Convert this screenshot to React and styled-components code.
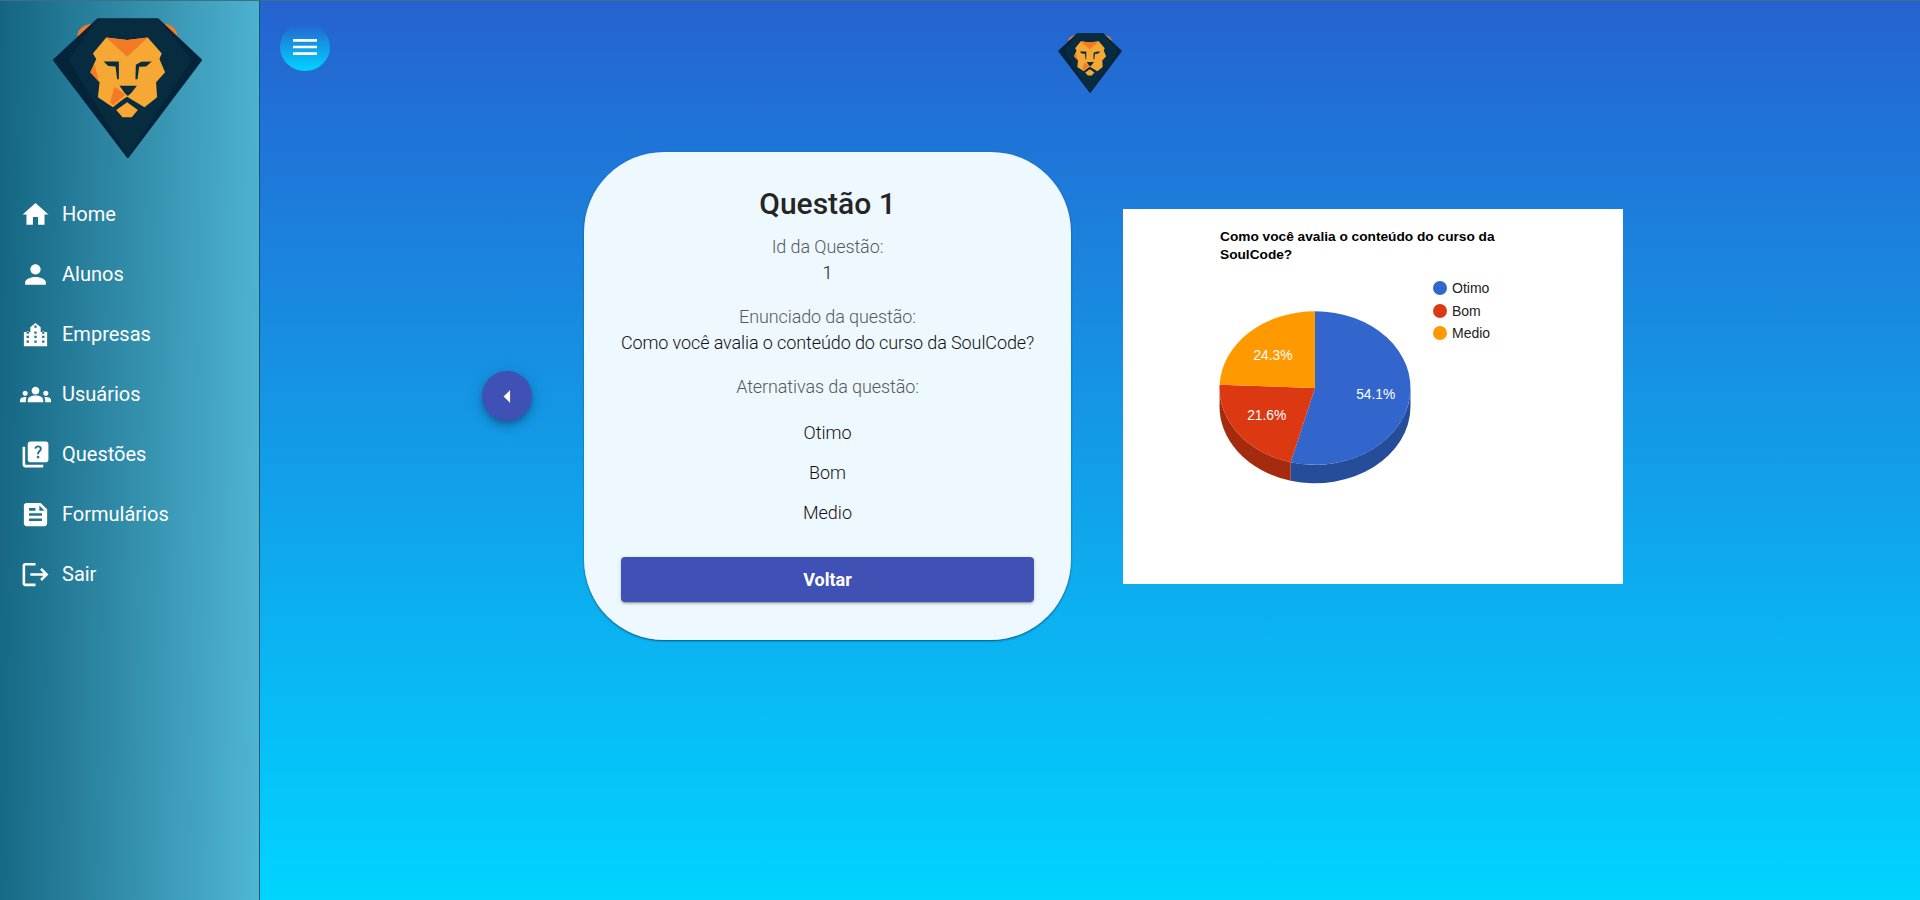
import React from "react";
import styled, { createGlobalStyle } from "styled-components";
import {
  MdHome,
  MdPerson,
  MdGroups,
  MdQuiz,
  MdFeed,
  MdLogout,
  MdMenu,
  MdArrowLeft,
} from "react-icons/md";

const GlobalStyle = createGlobalStyle`
  * { box-sizing: border-box; }
  body {
    margin: 0;
    font-family: Roboto, "Liberation Sans", sans-serif;
    overflow: hidden;
  }
`;

const Page = styled.div`
  display: flex;
  width: 1920px;
  height: 900px;
  background: linear-gradient(180deg, #2563d0 0%, #00d4ff 100%);
  border-top: 1px solid #3d6f86;
`;

const Sidebar = styled.aside`
  flex: 0 0 260px;
  display: flex;
  flex-direction: column;
  background: linear-gradient(91deg, #146581 0%, #50b6d4 100%);
  border-right: 1px solid #17566e;
`;

const SideLogo = styled.div`
  display: flex;
  justify-content: center;
  padding: 17px 5px 0 0;
  height: 183px;
`;

const NavList = styled.nav`
  display: flex;
  flex-direction: column;
`;

const NavItem = styled.a`
  display: flex;
  align-items: center;
  height: 60px;
  padding-left: 20px;
  gap: 11px;
  color: #fff;
  font-size: 20px;
  svg {
    width: 31px;
    height: 31px;
    flex: none;
  }
`;

const Main = styled.main`
  flex: 1;
  display: flex;
  flex-direction: column;
`;

const Header = styled.header`
  position: relative;
  display: flex;
  justify-content: center;
  height: 151px;
  padding-top: 32px;
`;

const MenuButton = styled.button`
  position: absolute;
  left: 20px;
  top: 22px;
  width: 50px;
  height: 48px;
  border: 0;
  border-radius: 50%;
  padding: 0;
  display: flex;
  align-items: center;
  justify-content: center;
  color: #fff;
  background: linear-gradient(180deg, #2563d0 0%, #00d4ff 100%);
  svg {
    width: 32px;
    height: 32px;
  }
`;

const Content = styled.section`
  display: flex;
  align-items: flex-start;
  padding-left: 222px;
  gap: 52px;
`;

const BackFab = styled.button`
  width: 50px;
  height: 50px;
  margin-top: 219px;
  border: 0;
  border-radius: 50%;
  padding: 0;
  display: flex;
  align-items: center;
  justify-content: center;
  color: #fff;
  background: #3f51b5;
  box-shadow: 0 3px 5px -1px rgba(0, 0, 0, 0.2), 0 6px 10px 0 rgba(0, 0, 0, 0.14),
    0 1px 18px 0 rgba(0, 0, 0, 0.12);
  svg {
    width: 31px;
    height: 31px;
  }
`;

const Card = styled.article`
  width: 487px;
  height: 488px;
  padding: 34px 37px 0;
  display: flex;
  flex-direction: column;
  align-items: center;
  text-align: center;
  background: #eef8ff;
  border-radius: 80px;
  box-shadow: 0 1px 2px rgba(0, 50, 90, 0.7);
`;

const Title = styled.h1`
  margin: 0 0 12px;
  height: 36px;
  line-height: 36px;
  font-size: 30px;
  font-weight: 500;
  color: #252525;
`;

const Field = styled.div`
  margin-bottom: ${(props) => props.$gap}px;
  font-size: 18px;
  line-height: 26px;
  font-weight: 300;
  letter-spacing: -0.1px;
  white-space: nowrap;
`;

const Label = styled.div`
  color: #555a5e;
`;

const Value = styled.div`
  color: #111;
`;

const Option = styled.div`
  height: 40px;
  line-height: 40px;
  font-size: 18px;
  font-weight: 300;
  color: #111;
`;

const Options = styled.div`
  margin-bottom: 24px;
`;

const BackButton = styled.button`
  width: 413px;
  height: 45px;
  flex: none;
  border: 0;
  border-radius: 4px;
  font-family: inherit;
  font-size: 18px;
  font-weight: 700;
  color: #fff;
  background: #3f51b5;
  box-shadow: 0 3px 1px -2px rgba(0, 0, 0, 0.2), 0 2px 2px 0 rgba(0, 0, 0, 0.14),
    0 1px 5px 0 rgba(0, 0, 0, 0.12);
`;

const ChartBox = styled.figure`
  margin: 57px 0 0;
  width: 500px;
  height: 375px;
  background: #fff;
  svg {
    display: block;
  }
`;

const ChartTitle = styled.text`
  font-family: "Liberation Sans", Arial, sans-serif;
  font-size: 13.7px;
  font-weight: 700;
  fill: #000;
`;

const LegendText = styled.text`
  font-family: "Liberation Sans", Arial, sans-serif;
  font-size: 14px;
  fill: #222;
`;

const SliceLabel = styled.text`
  font-family: "Liberation Sans", Arial, sans-serif;
  font-size: 13.8px;
  fill: #fff;
  text-anchor: middle;
`;

// predio com o centro em ponta, nao tem igual no pacote de icones
const EmpresasIcon = () => (
  <svg viewBox="0 0 24 24" fill="currentColor">
    <path
      fillRule="evenodd"
      d="M3 21V10H8V6.3L12 3L16 6.3V10H21V21H3Z
         M11.1 5H12.9V6.8H11.1Z
         M5.1 9.6H6.9V11.4H5.1Z M11.1 9.6H12.9V11.4H11.1Z M17.1 9.6H18.9V11.4H17.1Z
         M5.1 13H6.9V14.8H5.1Z M11.1 13H12.9V14.8H11.1Z M17.1 13H18.9V14.8H17.1Z
         M5.1 16.6H6.9V18.4H5.1Z M11.1 16.6H12.9V18.4H11.1Z M17.1 16.6H18.9V18.4H17.1Z"
    />
  </svg>
);

const navItems = [
  { label: "Home", Icon: MdHome },
  { label: "Alunos", Icon: MdPerson },
  { label: "Empresas", Icon: EmpresasIcon },
  { label: "Usuários", Icon: MdGroups },
  { label: "Questões", Icon: MdQuiz },
  { label: "Formulários", Icon: MdFeed },
  { label: "Sair", Icon: MdLogout },
];

const Logo = ({ width, height }) => (
  <svg width={width} height={height} viewBox="160 52 448 420">
    <path d="M232 105 Q236 76 275 68 L300 110 Z" fill="#f47b25" />
    <path d="M535 105 Q532 76 497 68 L470 110 Z" fill="#f47b25" />
    <path
      d="M295 55 H475 L605 178 L385 470 L163 178 Z"
      fill="#04243a"
      stroke="#04243a"
      strokeWidth="6"
      strokeLinejoin="round"
    />
    <path d="M295 55 H475 L578 178 L385 468 L207 178 Z" fill="#072c40" />
    <path
      d="M320 110 L383 118 L445 110 L487 158 L480 175 L497 215 L470 245 L473 290 L435 320 L395 296 L383 288 L371 296 L340 320 L295 290 L300 245 L272 215 L290 175 L280 158 Z"
      fill="#f5a934"
    />
    <path d="M320 110 L383 118 L445 110 L383 168 Z" fill="#f47b25" />
    <path d="M272 215 L285 190 L298 243 Z" fill="#f47b25" />
    <path d="M345 258 L378 282 L340 314 L332 305 Z" fill="#f47b25" />
    <path d="M350 328 L383 305 L415 328 L397 350 L369 350 Z" fill="#f5a934" />
    <path d="M312 182 H358 V236 L353 236 L348 197 L326 196 Z" fill="#072c40" />
    <path d="M457 182 L425 183 L409 192 L408 236 L414 236 L419 198 L440 197 Z" fill="#072c40" />
    <path d="M360 255 H412 L396 276 L385 286 L375 276 Z" fill="#072c40" />
  </svg>
);

// angulos medidos a partir do topo, sentido horario
const CX = 192;
const CY = 179;
const RX = 95.5;
const RY = 76.7;
const DEPTH = 18.5;

const point = (pct) => {
  const t = (pct / 100) * 2 * Math.PI;
  return [CX + RX * Math.sin(t), CY - RY * Math.cos(t)];
};

const slice = (from, to) => {
  const [x1, y1] = point(from);
  const [x2, y2] = point(to);
  const large = to - from > 50 ? 1 : 0;
  return `M${CX} ${CY} L${x1} ${y1} A${RX} ${RY} 0 ${large} 1 ${x2} ${y2} Z`;
};

const side = (fromX, fromY, toX, toY) =>
  `M${fromX} ${fromY} A${RX} ${RY} 0 0 1 ${toX} ${toY} L${toX} ${toY + DEPTH} A${RX} ${RY} 0 0 0 ${fromX} ${fromY + DEPTH} Z`;

const PieChart = () => {
  const [bx, by] = point(54.1);
  const [rx, ry] = point(75.7);
  return (
    <svg width="500" height="375" viewBox="0 0 500 375">
      <ChartTitle x="97" y="32">Como você avalia o conteúdo do curso da</ChartTitle>
      <ChartTitle x="97" y="50">SoulCode?</ChartTitle>

      <path d={side(CX + RX, CY, bx, by)} fill="#264d99" />
      <path d={side(bx, by, rx, ry)} fill="#a52b0e" />

      <path d={slice(0, 54.1)} fill="#3366cc" />
      <path d={slice(54.1, 75.7)} fill="#dc3912" />
      <path d={slice(75.7, 100)} fill="#ff9900" />

      <SliceLabel x="252.7" y="189.5">54.1%</SliceLabel>
      <SliceLabel x="143.7" y="210.5">21.6%</SliceLabel>
      <SliceLabel x="150" y="150.5">24.3%</SliceLabel>

      <circle cx="317" cy="79" r="7" fill="#3366cc" />
      <LegendText x="329" y="84">Otimo</LegendText>
      <circle cx="317" cy="102" r="7" fill="#dc3912" />
      <LegendText x="329" y="107">Bom</LegendText>
      <circle cx="317" cy="124" r="7" fill="#ff9900" />
      <LegendText x="329" y="129">Medio</LegendText>
    </svg>
  );
};

const App = () => {
  return (
    <Page>
      <GlobalStyle />
      <Sidebar>
        <SideLogo>
          <Logo width={149} height={140} />
        </SideLogo>
        <NavList>
          {navItems.map(({ label, Icon }) => (
            <NavItem key={label}>
              <Icon />
              {label}
            </NavItem>
          ))}
        </NavList>
      </Sidebar>
      <Main>
        <Header>
          <MenuButton aria-label="menu">
            <MdMenu />
          </MenuButton>
          <Logo width={64} height={60} />
        </Header>
        <Content>
          <BackFab aria-label="voltar">
            <MdArrowLeft />
          </BackFab>
          <Card>
            <Title>Questão 1</Title>
            <Field $gap={18}>
              <Label>Id da Questão:</Label>
              <Value>1</Value>
            </Field>
            <Field $gap={18}>
              <Label>Enunciado da questão:</Label>
              <Value>Como você avalia o conteúdo do curso da SoulCode?</Value>
            </Field>
            <Field $gap={13}>
              <Label>Aternativas da questão:</Label>
            </Field>
            <Options>
              <Option>Otimo</Option>
              <Option>Bom</Option>
              <Option>Medio</Option>
            </Options>
            <BackButton>Voltar</BackButton>
          </Card>
          <ChartBox>
            <PieChart />
          </ChartBox>
        </Content>
      </Main>
    </Page>
  );
};

export default App;
